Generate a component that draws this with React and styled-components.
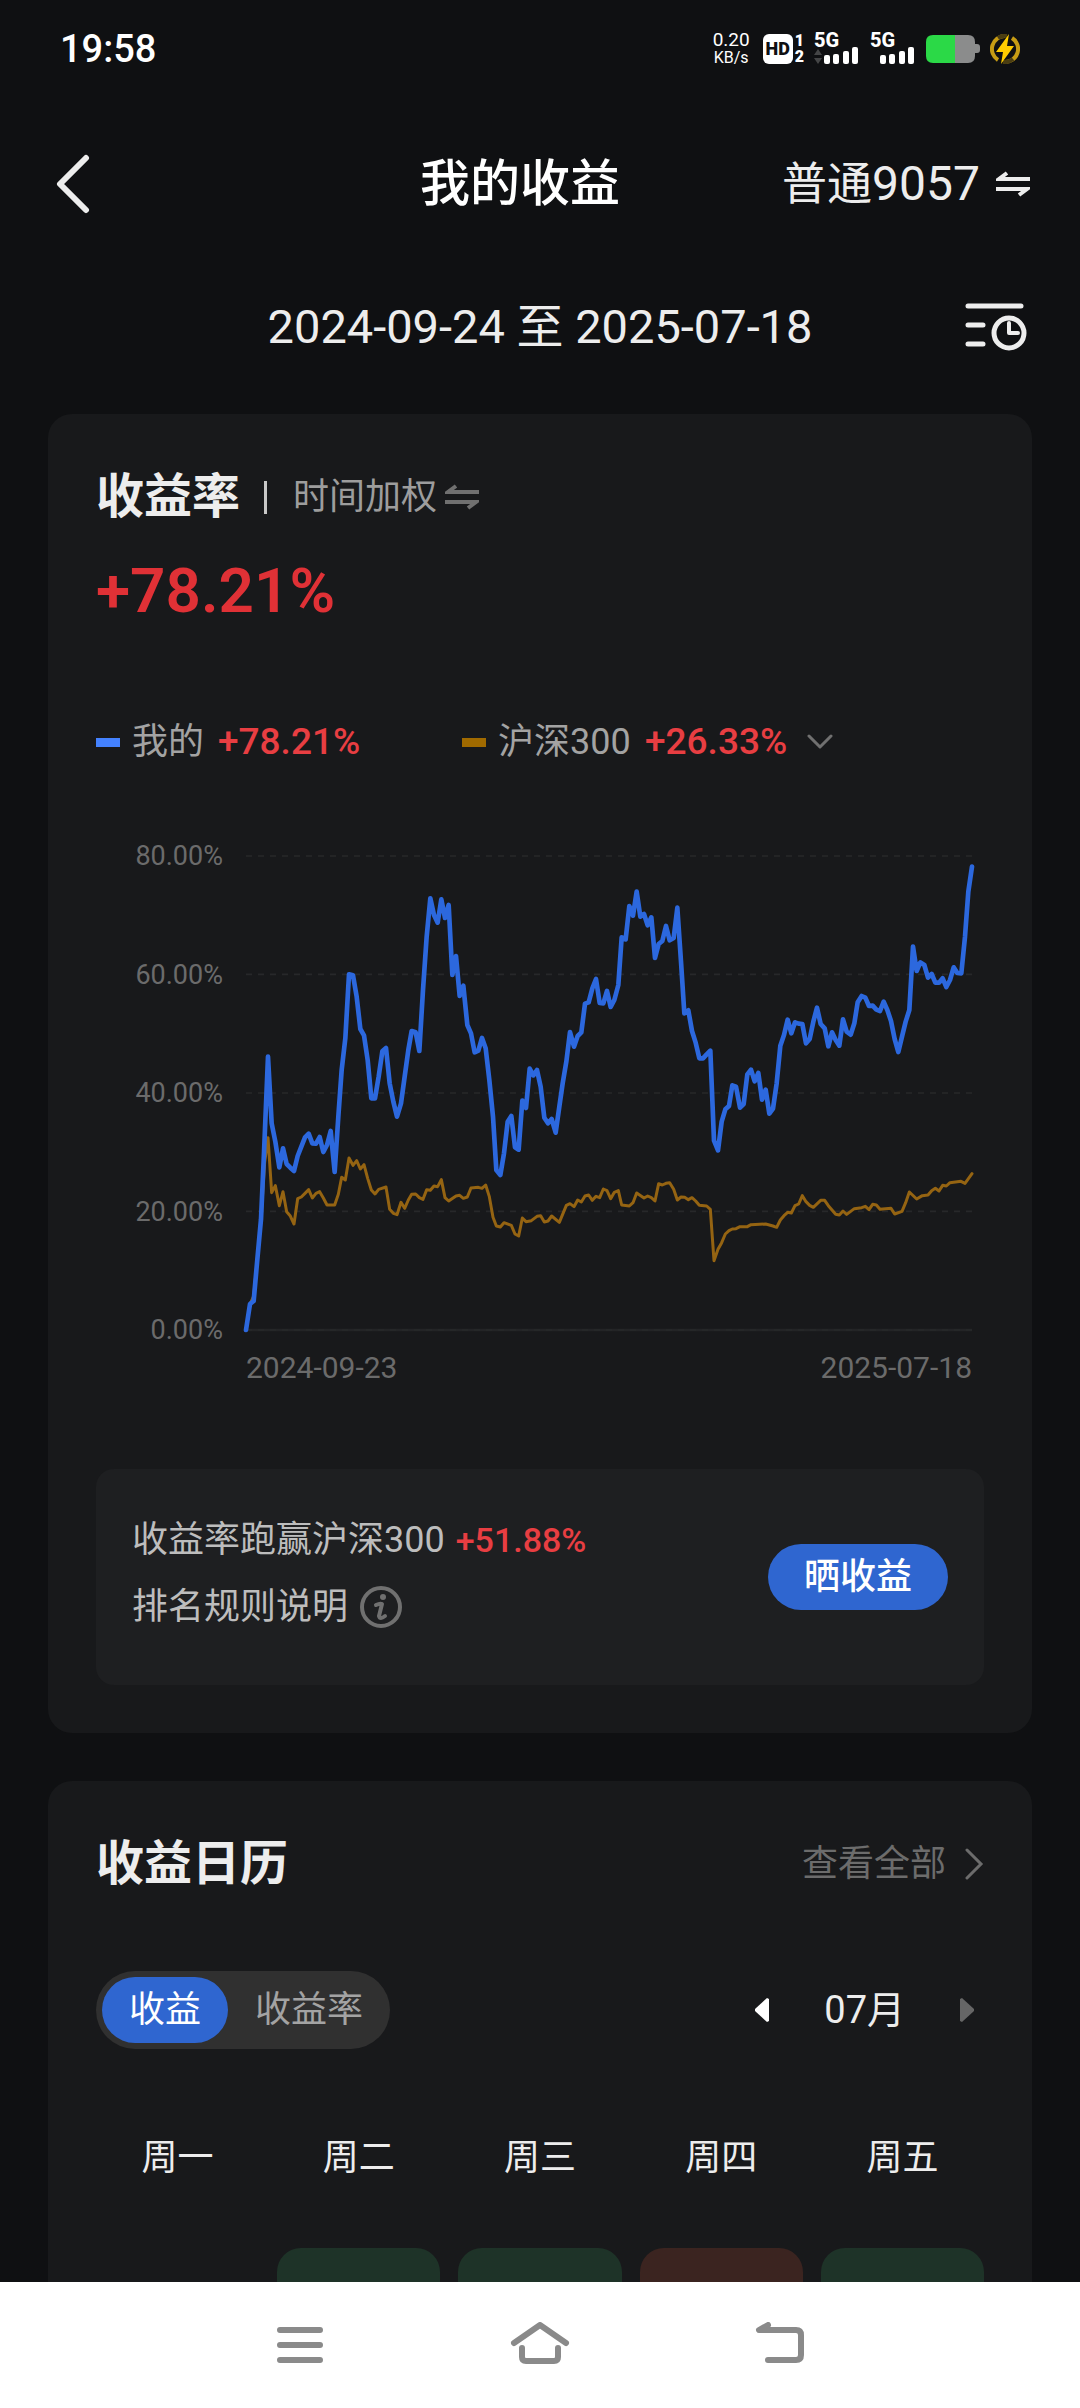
import React, { useState } from "react";
import styled, { createGlobalStyle } from "styled-components";

const GlobalStyle = createGlobalStyle`
  * {
    box-sizing: border-box;
  }

  body {
    margin: 0;
    background: #0f1012;
    color: #ededed;
    font-family: Roboto, "Noto Sans CJK SC", sans-serif;
  }

  button,
  select {
    margin: 0;
    padding: 0;
    border: none;
    background: none;
    color: inherit;
    font: inherit;
    cursor: pointer;
  }

  h1,
  h2,
  p {
    margin: 0;
  }

  svg {
    display: block;
    flex: none;
  }
`;

const Screen = styled.div`
  display: flex;
  flex-direction: column;
  height: 100vh;
`;

const StatusBar = styled.header`
  display: flex;
  flex: none;
  align-items: center;
  justify-content: space-between;
  height: 98px;
  padding: 0 60px;
  color: #fff;
`;

const Time = styled.span`
  font-size: 38px;
  font-weight: 500;
  line-height: 40px;
`;

const StatusIcons = styled.div`
  display: flex;
  align-items: center;
  gap: 10px;
`;

const NetSpeed = styled.span`
  display: flex;
  flex-direction: column;
  align-items: center;
  margin-right: 3px;
  font-size: 19px;
  line-height: 18px;
`;

const NetUnit = styled.span`
  font-size: 16px;
`;

const HdIcon = styled.span`
  display: flex;
  align-items: center;
  gap: 2px;
  font-weight: 900;
`;

const HdBox = styled.span`
  width: 30px;
  border-radius: 6px;
  background: #fff;
  color: #0f1012;
  font-size: 18px;
  line-height: 30px;
  text-align: center;
`;

const HdSlots = styled.span`
  display: flex;
  flex-direction: column;
  align-items: center;
  font-size: 16px;
  line-height: 16px;
`;

const SignalIcon = styled.span`
  display: flex;
  flex-direction: column;
  width: 46px;
  font-size: 20px;
  font-weight: 800;
  line-height: 13px;
`;

const TitleBar = styled.div`
  display: grid;
  flex: none;
  grid-template-columns: 1fr auto 1fr;
  align-items: center;
  height: 172px;
  padding: 0 50px 0 10px;
`;

const BackButton = styled.button`
  justify-self: start;
  padding-left: 46px;
`;

const Title = styled.h1`
  color: #fff;
  font-size: 50px;
  font-weight: 500;
  line-height: 60px;
`;

const AccountButton = styled.button`
  display: flex;
  align-items: center;
  justify-self: end;
  gap: 16px;
  font-size: 45px;
  line-height: 60px;
`;

const AccountNumber = styled.span`
  font-size: 48px;
`;

const DateBar = styled.div`
  display: grid;
  flex: none;
  grid-template-columns: 1fr auto 1fr;
  align-items: center;
  height: 114px;
  padding: 0 53px;
`;

const DateRange = styled.span`
  grid-column: 2;
  font-size: 47px;
  line-height: 60px;
`;

const FilterButton = styled.button`
  justify-self: end;
`;

const Main = styled.main`
  display: flex;
  flex: 1;
  flex-direction: column;
  gap: 48px;
  min-height: 0;
  padding: 30px 48px 0;
  overflow: hidden;
`;

const Card = styled.section`
  flex: none;
  padding: 56px 48px 48px;
  border-radius: 24px;
  background: #18191b;
`;

const CardHeader = styled.div`
  display: flex;
  align-items: center;
  height: 54px;
`;

const CardTitle = styled.h2`
  font-size: 48px;
  font-weight: 700;
  line-height: 54px;
`;

const Divider = styled.span`
  width: 3px;
  height: 33px;
  margin: 0 26px 0 24px;
  background: #c8c8c8;
`;

const ModeButton = styled.button`
  display: flex;
  align-items: center;
  gap: 8px;
  color: #9d9d9d;
  font-size: 36px;
  line-height: 48px;

  svg {
    color: #707070;
  }
`;

const TotalRate = styled.p`
  margin-top: 27px;
  color: #e03136;
  font-size: 62px;
  font-weight: 600;
  line-height: 80px;
`;

const Legend = styled.div`
  display: grid;
  grid-template-columns: 366fr 522fr;
  margin-top: 89px;
`;

const LegendItem = styled.label`
  display: flex;
  align-items: center;
  height: 44px;
  color: #a3a3a3;
  font-size: 36px;
  line-height: 44px;
`;

const Swatch = styled.span`
  width: 24px;
  height: 9px;
  margin-right: 12px;
  background: ${(props) => props.$color};
`;

const IndexSelect = styled.select`
  appearance: none;
  line-height: 44px;
`;

const Rate = styled.span`
  color: #e83e42;
  font-size: ${(props) => props.$size}px;
  font-weight: 500;
`;

const LegendRate = styled(Rate)`
  margin: 0 20px 0 14px;
`;

const Chart = styled.div`
  display: grid;
  grid-template-columns: 127px 1fr;
  column-gap: 23px;
  margin: 92px 12px 0 0;
  color: #6b6b6b;
  line-height: 36px;
`;

const YAxis = styled.div`
  display: flex;
  flex-direction: column;
  justify-content: space-between;
  margin: -18px 0;
  font-size: 27px;
  text-align: right;
`;

const Plot = styled.svg`
  width: 100%;
  height: auto;
  overflow: visible;
`;

const XAxis = styled.div`
  display: flex;
  grid-column: 2;
  justify-content: space-between;
  padding-top: 20px;
  font-size: 30px;
`;

const BeatPanel = styled.div`
  display: flex;
  align-items: center;
  justify-content: space-between;
  height: 216px;
  margin-top: 83px;
  padding: 0 36px;
  border-radius: 18px;
  background: #1e1f21;
`;

const BeatText = styled.div`
  display: flex;
  flex-direction: column;
  gap: 15px;
  padding-bottom: 8px;
  color: #bdbdbd;
  font-size: 36px;
  line-height: 52px;
`;

const BeatLine = styled.p`
  display: flex;
  align-items: center;
  gap: 11px;
`;

const RuleButton = styled.button`
  display: flex;
  align-items: center;
  gap: 12px;
`;

const ShareButton = styled.button`
  height: 66px;
  padding: 0 36px;
  border-radius: 33px;
  background: #2f66d0;
  color: #fff;
  font-size: 36px;
  font-weight: 500;
  line-height: 66px;
`;

const MoreLink = styled.a`
  display: flex;
  align-items: center;
  gap: 18px;
  margin-left: auto;
  color: #6c6c6c;
  font-size: 36px;
  line-height: 48px;
  text-decoration: none;
`;

const CalendarToolbar = styled.div`
  display: flex;
  align-items: center;
  justify-content: space-between;
  margin-top: 80px;
`;

const Segmented = styled.div`
  display: flex;
  padding: 6px 0 6px 6px;
  border-radius: 39px;
  background: #303030;
`;

const Segment = styled.button`
  padding: 0 27px;
  border-radius: 33px;
  background: ${(props) => (props.$active ? "#2f66d0" : "transparent")};
  color: ${(props) => (props.$active ? "#fff" : "#a3a3a3")};
  font-size: 36px;
  line-height: 66px;
`;

const MonthPicker = styled.div`
  display: flex;
  align-items: center;
  gap: 55px;
  padding-right: 10px;
  font-size: 38px;
  line-height: 48px;
`;

const Calendar = styled.table`
  display: block;
  margin-top: 85px;

  thead,
  tbody {
    display: block;
  }

  tbody {
    margin-top: 66px;
  }
`;

const Week = styled.tr`
  display: grid;
  grid-template-columns: repeat(5, 1fr);
  gap: 18px;
`;

const Weekday = styled.th`
  padding: 0;
  font-size: 36px;
  font-weight: 400;
  line-height: 48px;
`;

const dayColors = {
  down: "#1e3328",
  up: "#3b2420",
};

const Day = styled.td`
  height: 163px;
  border-radius: 24px;
  background: ${(props) => dayColors[props.$trend] || "transparent"};
`;

const NavBar = styled.nav`
  display: flex;
  flex: none;
  align-items: center;
  justify-content: center;
  gap: 180px;
  height: 126px;
  background: #fff;
`;

const NavButton = styled.button`
  width: 60px;
`;

// Plot space is 2178 x 1422, 80% at the top and 0% at the bottom
const mine =
  "0,1422 12,1344 23,1335 34,1210 45,1090 54,890 66,602 77,802 88,857 100,934 111,877 122,924 133,935 144,945 155,900 166,872 177,844 188,833 199,862 210,863 221,843 232,888 243,867 254,825 266,948 277,782 287,642 298,547 309,355 321,358 332,422 343,519 354,538 365,612 376,727 387,727 398,662 409,586 420,576 431,682 442,737 453,782 465,742 476,662 487,582 497,525 509,529 520,585 531,402 542,242 553,127 564,177 575,200 586,130 597,186 608,147 619,357 630,300 641,420 652,389 664,507 675,532 686,589 697,584 708,546 719,577 730,672 741,782 751,942 763,957 774,892 785,797 796,780 807,874 818,881 829,734 840,756 851,638 862,658 873,642 884,692 895,785 906,802 917,789 929,830 940,752 950,682 961,617 972,528 984,572 995,540 1006,529 1017,443 1028,439 1039,397 1050,369 1061,441 1072,442 1083,405 1094,453 1105,432 1117,387 1127,244 1139,250 1150,150 1161,179 1172,107 1183,182 1194,174 1205,208 1216,184 1227,306 1238,264 1249,255 1260,210 1271,253 1283,246 1294,155 1305,317 1315,472 1327,463 1338,525 1349,560 1360,607 1371,607 1382,595 1393,584 1404,854 1416,883 1427,797 1438,760 1449,750 1459,688 1470,692 1482,755 1493,744 1504,655 1515,641 1526,676 1537,651 1548,731 1559,701 1570,773 1581,758 1592,682 1603,569 1614,537 1625,491 1636,532 1647,499 1658,503 1669,504 1680,562 1691,549 1702,497 1713,455 1724,504 1736,517 1747,571 1758,529 1769,552 1780,569 1791,490 1802,527 1814,536 1825,502 1835,439 1847,420 1858,425 1869,450 1880,449 1891,461 1902,465 1913,437 1924,462 1935,495 1946,549 1957,588 1968,542 1979,497 1990,462 2001,272 2012,345 2023,319 2035,327 2046,365 2057,354 2068,380 2079,380 2090,367 2101,393 2112,372 2123,334 2134,351 2146,352 2157,242 2167,107 2178,32";

const csi300 =
  "0,1422 12,1344 23,1320 34,1210 45,1090 56,920 66,845 77,1010 88,989 100,1049 111,1007 122,1067 133,1080 144,1104 155,1028 166,1023 177,1012 188,1001 199,1026 210,1012 221,1007 232,1026 243,1047 266,1047 277,1015 287,964 298,972 309,906 321,928 332,914 343,939 354,926 365,967 376,1002 387,1014 398,1000 420,993 431,1060 442,1072 453,1076 465,1039 476,1057 487,1032 497,1015 509,1014 520,1025 531,1030 542,1001 553,1003 564,990 575,992 586,971 597,1025 608,1035 630,1020 641,1018 652,1027 664,1023 675,996 697,994 708,997 719,987 730,1022 741,1084 751,1110 763,1113 774,1100 796,1108 807,1134 818,1140 829,1086 840,1097 856,1094 873,1081 884,1079 895,1098 906,1095 917,1080 940,1099 961,1048 972,1043 984,1052 995,1032 1006,1038 1017,1020 1028,1017 1039,1033 1050,1021 1061,1025 1072,999 1083,1004 1094,1028 1105,1009 1117,1004 1127,1047 1150,1050 1161,1040 1172,1011 1194,1026 1205,1020 1216,1025 1227,1035 1238,983 1249,987 1260,982 1271,980 1283,1000 1294,1032 1305,1023 1316,1024 1327,1031 1338,1025 1349,1035 1360,1048 1382,1050 1393,1060 1404,1214 1416,1180 1427,1160 1438,1134 1449,1124 1459,1119 1470,1118 1482,1112 1504,1112 1515,1106 1559,1104 1581,1110 1592,1114 1603,1092 1614,1079 1625,1069 1636,1071 1647,1049 1658,1044 1669,1019 1680,1037 1691,1048 1702,1054 1724,1033 1736,1033 1747,1049 1769,1075 1780,1077 1791,1065 1802,1075 1825,1058 1847,1055 1858,1051 1869,1061 1880,1045 1891,1047 1902,1060 1935,1057 1946,1074 1968,1066 1979,1040 1990,1008 2012,1029 2029,1019 2046,1017 2057,1004 2068,997 2079,1005 2090,988 2101,990 2112,980 2145,976 2157,982 2178,953";

const ticks = ["80.00%", "60.00%", "40.00%", "20.00%", "0.00%"];
const gridLines = [0, 355, 711, 1066, 1422];
const weekdays = ["周一", "周二", "周三", "周四", "周五"];
const firstWeek = [null, "down", "down", "up", "down"];

function SwapIcon() {
  return (
    <svg width="34" height="26" viewBox="0 0 34 26" fill="none">
      <path
        d="M34 8H3L11 2M0 18H31L23 24"
        stroke="currentColor"
        strokeWidth="4"
      />
    </svg>
  );
}

function Signal({ active }) {
  return (
    <SignalIcon>
      5G
      <svg width="46" height="17" viewBox="0 0 46 17" fill="#fff">
        {active && <path d="M4 2L8 8H0ZM4 17L8 11H0Z" fill="#444546" />}
        <rect x="10" y="8" width="6" height="9" rx="2" />
        <rect x="19" y="7" width="6" height="10" rx="2" />
        <rect x="29" y="4" width="6" height="13" rx="2" />
        <rect x="38" y="0" width="6" height="17" rx="2" />
      </svg>
    </SignalIcon>
  );
}

function RateChart() {
  return (
    <Chart>
      <YAxis>
        {ticks.map((tick) => (
          <span key={tick}>{tick}</span>
        ))}
      </YAxis>
      <Plot viewBox="0 0 2178 1422" fill="none" role="img" aria-label="收益率">
        <path d="M0 1422H2178" stroke="#232426" strokeWidth="8" />
        {gridLines.map((y) => (
          <path
            key={y}
            d={`M0 ${y}H2178`}
            stroke="#27282a"
            strokeWidth="5"
            strokeDasharray="18 18"
          />
        ))}
        <polyline
          points={csi300}
          stroke="#956412"
          strokeWidth="9"
          strokeLinejoin="round"
          strokeLinecap="round"
        />
        <polyline
          points={mine}
          stroke="#2c68de"
          strokeWidth="14"
          strokeLinejoin="round"
          strokeLinecap="round"
        />
      </Plot>
      <XAxis>
        <span>2024-09-23</span>
        <span>2025-07-18</span>
      </XAxis>
    </Chart>
  );
}

function App() {
  const [mode, setMode] = useState("amount");

  return (
    <Screen>
      <GlobalStyle />
      <StatusBar>
        <Time>19:58</Time>
        <StatusIcons>
          <NetSpeed>
            <span>0.20</span>
            <NetUnit>KB/s</NetUnit>
          </NetSpeed>
          <HdIcon>
            <HdBox>HD</HdBox>
            <HdSlots>
              <span>1</span>
              <span>2</span>
            </HdSlots>
          </HdIcon>
          <Signal active />
          <Signal />
          <svg width="54" height="28" viewBox="0 0 54 28">
            <path
              d="M29 0H42Q49 0 49 7V9H51Q54 9 54 12V15Q54 18 51 18H49V21Q49 28 42 28H29Z"
              fill="#8b8c8c"
            />
            <path d="M29 0H7Q0 0 0 7V21Q0 28 7 28H29Z" fill="#2bd947" />
          </svg>
          <svg width="30" height="30" viewBox="0 0 30 30" fill="none">
            <path
              d="M15 2A13 13 0 0 0 8 26M15 28A13 13 0 0 0 22 4"
              stroke="#c79c14"
              strokeWidth="4"
            />
            <path
              d="M8 4A13 13 0 0 1 17 2M13 28A13 13 0 0 0 23 25"
              stroke="#4a3d12"
              strokeWidth="4"
            />
            <path d="M19 0L6 18H13L11 30L24 12H17Z" fill="#fc0" />
          </svg>
        </StatusIcons>
      </StatusBar>

      <TitleBar>
        <BackButton aria-label="返回">
          <svg width="34" height="60" viewBox="0 0 34 60" fill="none">
            <path
              d="M30 4L4 30L30 56"
              stroke="#ededed"
              strokeWidth="6"
              strokeLinecap="round"
              strokeLinejoin="round"
            />
          </svg>
        </BackButton>
        <Title>我的收益</Title>
        <AccountButton>
          <span>
            普通<AccountNumber>9057</AccountNumber>
          </span>
          <SwapIcon />
        </AccountButton>
      </TitleBar>

      <DateBar>
        <DateRange>2024-09-24 至 2025-07-18</DateRange>
        <FilterButton aria-label="选择时间">
          <svg width="62" height="50" viewBox="0 0 62 50" fill="none">
            <path
              d="M3 4H56M3 23H18M3 42H18"
              stroke="#ededed"
              strokeWidth="5"
              strokeLinecap="round"
            />
            <circle cx="44" cy="31" r="15" stroke="#ededed" strokeWidth="5" />
            <path
              d="M44 21V31H53"
              stroke="#ededed"
              strokeWidth="4"
              strokeLinecap="round"
              strokeLinejoin="round"
            />
          </svg>
        </FilterButton>
      </DateBar>

      <Main>
        <Card>
          <CardHeader>
            <CardTitle>收益率</CardTitle>
            <Divider />
            <ModeButton>
              时间加权
              <SwapIcon />
            </ModeButton>
          </CardHeader>
          <TotalRate>+78.21%</TotalRate>

          <Legend>
            <LegendItem as="div">
              <Swatch $color="#4482ff" />
              我的
              <LegendRate $size={37}>+78.21%</LegendRate>
            </LegendItem>
            <LegendItem>
              <Swatch $color="#a06a00" />
              <IndexSelect aria-label="对比指数">
                <option>沪深300</option>
              </IndexSelect>
              <LegendRate $size={37}>+26.33%</LegendRate>
              <svg width="26" height="16" viewBox="0 0 26 16" fill="none">
                <path
                  d="M2 2L13 13L24 2"
                  stroke="#707070"
                  strokeWidth="3"
                  strokeLinecap="round"
                  strokeLinejoin="round"
                />
              </svg>
            </LegendItem>
          </Legend>

          <RateChart />

          <BeatPanel>
            <BeatText>
              <BeatLine>
                收益率跑赢沪深300
                <Rate $size={34}>+51.88%</Rate>
              </BeatLine>
              <RuleButton>
                排名规则说明
                <svg width="42" height="42" viewBox="0 0 42 42" fill="none">
                  <circle cx="21" cy="21" r="19" stroke="#707070" strokeWidth="4" />
                  <circle cx="23" cy="11" r="3" fill="#707070" />
                  <path
                    d="M16 19Q20 17 22 18L19 30Q20 34 25 30"
                    stroke="#707070"
                    strokeWidth="4"
                    strokeLinecap="round"
                    strokeLinejoin="round"
                  />
                </svg>
              </RuleButton>
            </BeatText>
            <ShareButton>晒收益</ShareButton>
          </BeatPanel>
        </Card>

        <Card>
          <CardHeader>
            <CardTitle>收益日历</CardTitle>
            <MoreLink href="#calendar">
              查看全部
              <svg width="20" height="32" viewBox="0 0 20 32" fill="none">
                <path
                  d="M3 2L17 16L3 30"
                  stroke="currentColor"
                  strokeWidth="3"
                  strokeLinecap="round"
                />
              </svg>
            </MoreLink>
          </CardHeader>

          <CalendarToolbar>
            <Segmented>
              <Segment
                $active={mode === "amount"}
                aria-pressed={mode === "amount"}
                onClick={() => setMode("amount")}
              >
                收益
              </Segment>
              <Segment
                $active={mode === "rate"}
                aria-pressed={mode === "rate"}
                onClick={() => setMode("rate")}
              >
                收益率
              </Segment>
            </Segmented>
            <MonthPicker>
              <button aria-label="上个月">
                <svg width="14" height="24" viewBox="0 0 14 24">
                  <path d="M14 1V23L12 24L0 13V11L12 0Z" fill="#fff" />
                </svg>
              </button>
              <span>07月</span>
              <button aria-label="下个月">
                <svg width="14" height="24" viewBox="0 0 14 24">
                  <path d="M0 1V23L2 24L14 13V11L2 0Z" fill="#666" />
                </svg>
              </button>
            </MonthPicker>
          </CalendarToolbar>

          <Calendar>
            <thead>
              <Week>
                {weekdays.map((name) => (
                  <Weekday key={name}>{name}</Weekday>
                ))}
              </Week>
            </thead>
            <tbody>
              <Week>
                {firstWeek.map((trend, i) => (
                  <Day key={weekdays[i]} $trend={trend} />
                ))}
              </Week>
            </tbody>
          </Calendar>
        </Card>
      </Main>

      <NavBar>
        <NavButton aria-label="菜单">
          <svg width="60" height="46" viewBox="0 3 60 46" fill="none">
            <path
              d="M10 11H50M10 26H50M10 41H50"
              stroke="#8a8a8a"
              strokeWidth="6"
              strokeLinecap="round"
            />
          </svg>
        </NavButton>
        <NavButton aria-label="主页">
          <svg width="60" height="46" viewBox="0 2 60 46" fill="none">
            <path
              d="M4 23L30 5L56 23M12 28V37Q12 41 16 41H44Q48 41 48 37V28"
              stroke="#8a8a8a"
              strokeWidth="6"
              strokeLinecap="round"
              strokeLinejoin="round"
            />
          </svg>
        </NavButton>
        <NavButton aria-label="后退">
          <svg width="60" height="46" viewBox="0 3 60 46" fill="none">
            <path
              d="M18 6L9 11H46Q51 11 51 16V36Q51 41 46 41H18"
              stroke="#8a8a8a"
              strokeWidth="6"
              strokeLinecap="round"
              strokeLinejoin="round"
            />
          </svg>
        </NavButton>
      </NavBar>
    </Screen>
  );
}

export default App;
